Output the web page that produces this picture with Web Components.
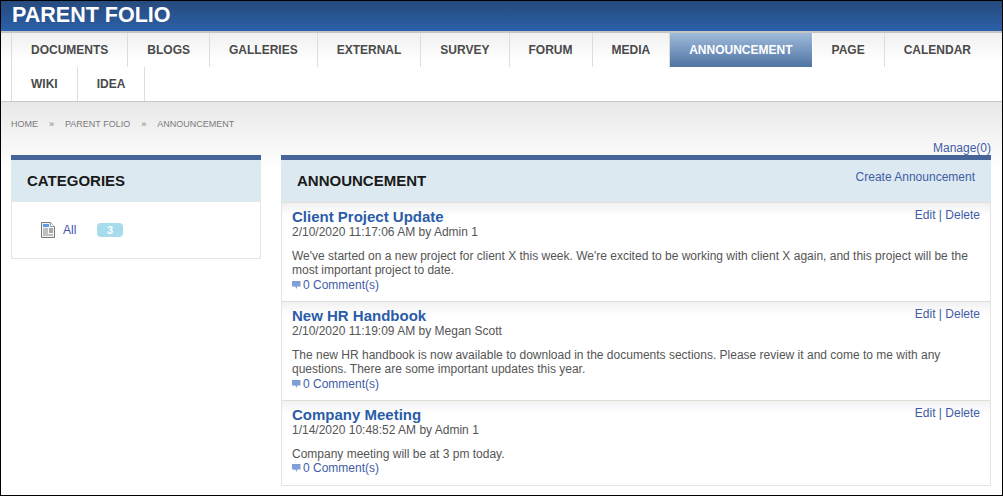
<!DOCTYPE html>
<html>
<head>
<meta charset="utf-8">
<title>Parent Folio</title>
<style>
    html, body { margin: 0; padding: 0; background: #fff; }
    body { font: 12px "Liberation Sans", Arial, sans-serif; color: #555; }
</style>
</head>
<body>
<pf-page>
    <pf-header slot="header">PARENT FOLIO</pf-header>
    <pf-nav slot="nav">
        <pf-tab first>DOCUMENTS</pf-tab>
        <pf-tab>BLOGS</pf-tab>
        <pf-tab>GALLERIES</pf-tab>
        <pf-tab>EXTERNAL</pf-tab>
        <pf-tab>SURVEY</pf-tab>
        <pf-tab>FORUM</pf-tab>
        <pf-tab>MEDIA</pf-tab>
        <pf-tab active>ANNOUNCEMENT</pf-tab>
        <pf-tab>PAGE</pf-tab>
        <pf-tab last>CALENDAR</pf-tab>
        <pf-tab first>WIKI</pf-tab>
        <pf-tab>IDEA</pf-tab>
    </pf-nav>
    <pf-crumbs slot="crumbs"></pf-crumbs>
    <pf-panel slot="side" heading="CATEGORIES">
        <pf-category label="All" count="3"></pf-category>
    </pf-panel>
    <pf-panel slot="main" heading="ANNOUNCEMENT" action="Create Announcement">
        <pf-post heading="Client Project Update" meta="2/10/2020 11:17:06 AM by Admin 1">We've started on a new project for client X this week. We're excited to be working with client X again, and this project will be the most important project to date.</pf-post>
        <pf-post heading="New HR Handbook" meta="2/10/2020 11:19:09 AM by Megan Scott">The new HR handbook is now available to download in the documents sections. Please review it and come to me with any questions. There are some important updates this year.</pf-post>
        <pf-post heading="Company Meeting" meta="1/14/2020 10:48:52 AM by Admin 1" last>Company meeting will be at 3 pm today.</pf-post>
    </pf-panel>
</pf-page>

<script>
class PfPage extends HTMLElement {
    constructor() {
        super();
        this.attachShadow({ mode: 'open' });
        this.shadowRoot.innerHTML = `
            <style>
                :host {
                    display: block;
                    box-sizing: border-box;
                    height: 496px;
                    border: 1px solid #000;
                    overflow: hidden;
                    background: #fff;
                }
                .content {
                    height: 393px;
                    padding: 0 10px;
                    background: linear-gradient(#e8e8e8, #fff 68px);
                }
                .manage {
                    height: 15px;
                    padding-right: 1px;
                    text-align: right;
                    color: #3f5ca6;
                    line-height: 16px;
                }
                .cols {
                    display: grid;
                    grid-template-columns: 250px 710px;
                    gap: 20px;
                    align-items: start;
                }
            </style>
            <slot name="header"></slot>
            <slot name="nav"></slot>
            <div class="content">
                <slot name="crumbs"></slot>
                <div class="manage">Manage(0)</div>
                <div class="cols">
                    <slot name="side"></slot>
                    <slot name="main"></slot>
                </div>
            </div>
        `;
    }
}

class PfHeader extends HTMLElement {
    constructor() {
        super();
        this.attachShadow({ mode: 'open' });
        this.shadowRoot.innerHTML = `
            <style>
                :host {
                    display: block;
                    box-sizing: border-box;
                    height: 32px;
                    padding-left: 11px;
                    border-bottom: 2px solid #c4c4c4;
                    background: linear-gradient(#274a7c, #2b60a8);
                    color: #fff;
                    font-size: 21.5px;
                    font-weight: bold;
                    line-height: 28px;
                }
            </style>
            <slot></slot>
        `;
    }
}

class PfNav extends HTMLElement {
    constructor() {
        super();
        this.attachShadow({ mode: 'open' });
        this.shadowRoot.innerHTML = `
            <style>
                :host {
                    display: flex;
                    flex-wrap: wrap;
                    box-sizing: border-box;
                    height: 69px;
                    padding-left: 10px;
                    border-bottom: 1px solid #c8c8c8;
                    background: linear-gradient(#f0f0f0, #fff 28px);
                }
            </style>
            <slot></slot>
        `;
    }
}

class PfTab extends HTMLElement {
    constructor() {
        super();
        this.attachShadow({ mode: 'open' });
        this.shadowRoot.innerHTML = `
            <style>
                :host {
                    display: block;
                    box-sizing: border-box;
                    height: 34px;
                    padding: 0 19px;
                    border-right: 1px solid #dfded4;
                    color: #4a4a4a;
                    font-size: 12px;
                    font-weight: bold;
                    line-height: 34px;
                    white-space: nowrap;
                }
                :host([first]) { border-left: 1px solid #dfded4; }
                :host([last]) { border-right-color: transparent; }
                :host([active]) {
                    border-right-color: #fff;
                    background: linear-gradient(#a0bbda, #4e73a3);
                    color: #fff;
                }
            </style>
            <slot></slot>
        `;
    }
}

class PfCrumbs extends HTMLElement {
    constructor() {
        super();
        this.attachShadow({ mode: 'open' });
        this.shadowRoot.innerHTML = `
            <style>
                :host {
                    display: flex;
                    gap: 11px;
                    height: 38px;
                    padding-top: 17px;
                    box-sizing: border-box;
                    color: #7b7b7b;
                    font-size: 9px;
                    line-height: 11px;
                }
            </style>
            <span>HOME</span><span>»</span><span>PARENT FOLIO</span><span>»</span><span>ANNOUNCEMENT</span>
        `;
    }
}

class PfPanel extends HTMLElement {
    constructor() {
        super();
        this.attachShadow({ mode: 'open' });
        this.shadowRoot.innerHTML = `
            <style>
                :host {
                    display: block;
                    box-sizing: border-box;
                    border: 1px solid #e4e4e4;
                    border-top: 0;
                    background: #fff;
                }
                .head {
                    display: flex;
                    justify-content: space-between;
                    box-sizing: border-box;
                    height: 47px;
                    padding: 0 16px 0 15px;
                    border-top: 5px solid #476598;
                    margin: 0 -1px;
                    background: #dce9f0;
                }
                h3 {
                    margin: 0;
                    padding-left: 1px;
                    color: #1a1a1a;
                    font-size: 15px;
                    line-height: 41px;
                }
                .action {
                    padding-top: 9px;
                    color: #3f5ca6;
                    line-height: 16px;
                }
            </style>
            <div class="head">
                <h3></h3>
                <span class="action"></span>
            </div>
            <slot></slot>
        `;
        this.shadowRoot.querySelector('h3').textContent = this.getAttribute('heading');
        this.shadowRoot.querySelector('.action').textContent = this.getAttribute('action') || '';
    }
}

class PfCategory extends HTMLElement {
    constructor() {
        super();
        this.attachShadow({ mode: 'open' });
        this.shadowRoot.innerHTML = `
            <style>
                :host {
                    display: flex;
                    align-items: center;
                    box-sizing: border-box;
                    height: 56px;
                    padding: 0 0 0 29px;
                    color: #3f55ad;
                }
                svg { display: block; margin-right: 8px; }
                .label { width: 34px; }
                .badge {
                    width: 26px;
                    height: 14px;
                    border-radius: 4px;
                    background: #a6dcec;
                    color: #fff;
                    font-size: 11px;
                    font-weight: bold;
                    line-height: 14px;
                    text-align: center;
                }
            </style>
            <svg width="14" height="16" viewBox="0 0 14 16">
                <path d="M.5.5H9.5L13.5 4.5V15.5H.5Z" fill="#f4f4f4" stroke="#777"/>
                <path d="M9.5.5V4.500H13.500" fill="#fff" stroke="#999"/>
                <rect x="2" y="2" width="6" height="3" fill="#5b9be8"/>
                <path d="M2 7h5M2 9h5M2 11h5M2 13h10" stroke="#8a8a8a"/>
                <rect x="8" y="6" width="4" height="5" fill="#a9a9a9"/>
            </svg>
            <span class="label"></span>
            <span class="badge"></span>
        `;
        this.shadowRoot.querySelector('.label').textContent = this.getAttribute('label');
        this.shadowRoot.querySelector('.badge').textContent = this.getAttribute('count');
    }
}

class PfPost extends HTMLElement {
    constructor() {
        super();
        this.attachShadow({ mode: 'open' });
        this.shadowRoot.innerHTML = `
            <style>
                :host {
                    display: block;
                    position: relative;
                    box-sizing: border-box;
                    padding: 6px 10px 8.8px 10px;
                    border-top: 1px solid #e0dfd6;
                    background: linear-gradient(#f1f1f1, #fff 13px);
                    color: #555;
                    line-height: 14.4px;
                }
                :host([last]) { padding-bottom: 9.2px; }
                .tools {
                    position: absolute;
                    top: 5px;
                    right: 10px;
                    color: #3f5ca6;
                }
                h4 {
                    margin: 0;
                    color: #2b5ca8;
                    font-size: 15px;
                    line-height: 15px;
                }
                .meta { padding-top: 1px; margin-bottom: 9px; line-height: 15px; }
                .comments { color: #3f5ca6; }
                svg { margin-right: 2px; }
            </style>
            <div class="tools">Edit | Delete</div>
            <h4></h4>
            <div class="meta"></div>
            <div><slot></slot></div>
            <div class="comments"><svg width="9" height="8" viewBox="0 0 9 8"><path d="M0 0H8.500V5.500H5V8L3 5.500H0Z" fill="#7f9fd6"/></svg>0 Comment(s)</div>
        `;
        this.shadowRoot.querySelector('h4').textContent = this.getAttribute('heading');
        this.shadowRoot.querySelector('.meta').textContent = this.getAttribute('meta');
    }
}

customElements.define('pf-page', PfPage);
customElements.define('pf-header', PfHeader);
customElements.define('pf-nav', PfNav);
customElements.define('pf-tab', PfTab);
customElements.define('pf-crumbs', PfCrumbs);
customElements.define('pf-panel', PfPanel);
customElements.define('pf-category', PfCategory);
customElements.define('pf-post', PfPost);
</script>
</body>
</html>
